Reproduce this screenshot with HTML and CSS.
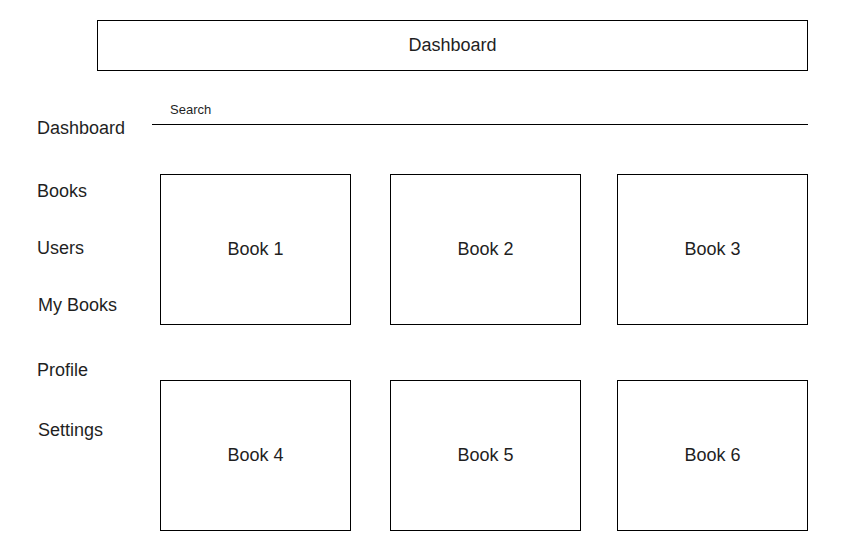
FILE: index.html
```html
<!DOCTYPE html>
<html lang="en">
<head>
<meta charset="utf-8">
<title>Dashboard</title>
<link rel="stylesheet" href="styles.css">
</head>
<body>
<header class="topbar">Dashboard</header>
<div class="layout">
  <nav class="sidebar">
    <a class="nav-item nav-first">Dashboard</a>
    <a class="nav-item nav-books">Books</a>
    <a class="nav-item nav-users">Users</a>
    <a class="nav-item nav-mybooks">My Books</a>
    <a class="nav-item nav-profile">Profile</a>
    <a class="nav-item nav-settings">Settings</a>
  </nav>
  <main class="content">
    <div class="search">Search</div>
    <div class="grid">
      <div class="card">Book 1</div>
      <div class="card">Book 2</div>
      <div class="card">Book 3</div>
      <div class="card">Book 4</div>
      <div class="card">Book 5</div>
      <div class="card">Book 6</div>
    </div>
  </main>
</div>
</body>
</html>
```
FILE: styles.css
```css
html, body {
  margin: 0;
  padding: 0;
  background: #fff;
}
body {
  font-family: "Liberation Sans", Arial, sans-serif;
  color: #1f1f1f;
  width: 850px;
  height: 542px;
  overflow: hidden;
}
.topbar {
  box-sizing: border-box;
  margin: 20px 0 0 97px;
  width: 711px;
  height: 51px;
  padding-bottom: 2px;
  border: 1px solid #000;
  display: flex;
  align-items: center;
  justify-content: center;
  font-size: 18px;
  line-height: 20px;
}
.layout {
  display: flex;
  align-items: flex-start;
}
.sidebar {
  box-sizing: border-box;
  width: 152px;
  padding-left: 37px;
  display: flex;
  flex-direction: column;
}
.nav-item {
  display: block;
  font-size: 18px;
  line-height: 20px;
  height: 20px;
  white-space: nowrap;
}
.nav-first { margin-top: 47px; }
.nav-books { margin-top: 43px; }
.nav-users { margin-top: 37px; }
.nav-mybooks { margin-top: 37px; margin-left: 1px; }
.nav-profile { margin-top: 45px; }
.nav-settings { margin-top: 40px; margin-left: 1px; }
.content {
  width: 656px;
}
.search {
  margin-top: 31px;
  padding: 0 0 7px 18px;
  font-size: 13px;
  line-height: 15px;
  border-bottom: 1px solid #000;
}
.grid {
  margin: 49px 0 0 8px;
  display: grid;
  grid-template-columns: 230px 227px 191px;
  grid-auto-rows: 151px;
  row-gap: 55px;
}
.card {
  box-sizing: border-box;
  width: 191px;
  padding-bottom: 2px;
  border: 1px solid #000;
  display: flex;
  align-items: center;
  justify-content: center;
  font-size: 18px;
  line-height: 20px;
}
```
